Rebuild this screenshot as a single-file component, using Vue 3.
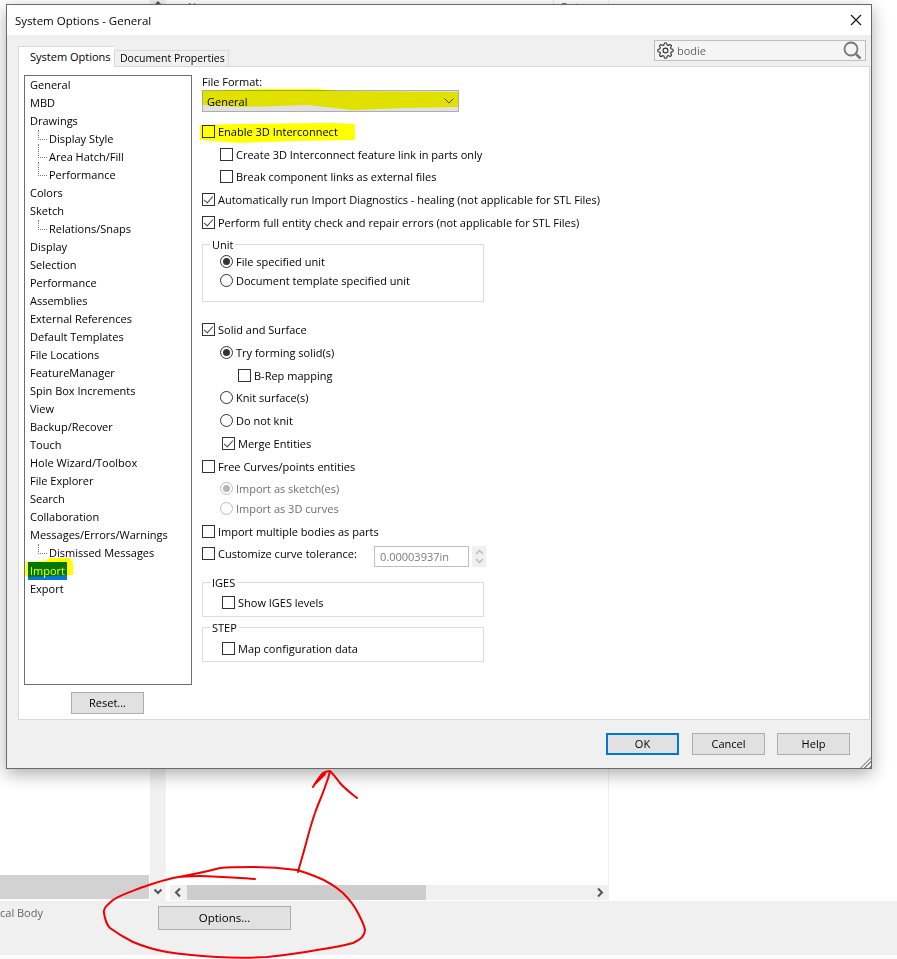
<template>
  <div class="screen">
    <div class="backdrop">
      <div class="panes">
        <div class="pane-left">
          <div class="left-bar"></div>
        </div>
        <div class="vscroll">
          <svg class="arrow-up" width="10" height="8" viewBox="0 0 10 8"><path d="M1.5 6 5 2.5 8.5 6" fill="none" stroke="#555" stroke-width="2" /></svg>
          <svg class="arrow-down" width="10" height="8" viewBox="0 0 10 8"><path d="M1.5 1.5 5 5 8.5 1.5" fill="none" stroke="#555" stroke-width="2" /></svg>
        </div>
        <div class="pane-mid">
          <div class="pane-head">
            <span class="head-a">Name</span>
            <span class="head-b">Date</span>
          </div>
          <div class="hscroll">
            <svg class="hs-btn" width="17" height="15" viewBox="0 0 17 15"><path d="M10 3.5 6 7.5 10 11.5" fill="none" stroke="#555" stroke-width="2" /></svg>
            <div class="hs-thumb"></div>
            <div class="hs-track"></div>
            <svg class="hs-btn" width="17" height="15" viewBox="0 0 17 15"><path d="M7 3.5 11 7.5 7 11.5" fill="none" stroke="#555" stroke-width="2" /></svg>
          </div>
        </div>
        <div class="pane-right"></div>
      </div>
      <div class="status">
        <span class="status-text">cal Body</span>
        <button class="btn options-btn">Options...</button>
      </div>
    </div>

    <div class="dialog">
      <div class="titlebar">
        <span>System Options - General</span>
        <svg class="close" width="12" height="12" viewBox="0 0 12 12"><path d="M1 1 11 11M11 1 1 11" stroke="#111" stroke-width="1.1" fill="none" /></svg>
      </div>
      <div class="tabrow">
        <div class="tab active">System Options</div>
        <div class="tab">Document Properties</div>
        <div class="search">
          <svg class="gear" width="17" height="17" viewBox="0 0 24 24" fill="none" stroke="#333" stroke-width="1.6">
            <circle cx="12" cy="12" r="3.4" />
            <path d="M19.4 15a1.65 1.65 0 0 0 .33 1.82l.06.06a2 2 0 0 1 0 2.83 2 2 0 0 1-2.83 0l-.06-.06a1.65 1.65 0 0 0-1.82-.33 1.65 1.65 0 0 0-1 1.51V21a2 2 0 0 1-2 2 2 2 0 0 1-2-2v-.09A1.65 1.65 0 0 0 9 19.4a1.65 1.65 0 0 0-1.82.33l-.06.06a2 2 0 0 1-2.83 0 2 2 0 0 1 0-2.83l.06-.06a1.65 1.65 0 0 0 .33-1.82 1.65 1.65 0 0 0-1.51-1H3a2 2 0 0 1-2-2 2 2 0 0 1 2-2h.09A1.65 1.65 0 0 0 4.6 9a1.65 1.65 0 0 0-.33-1.82l-.06-.06a2 2 0 0 1 0-2.83 2 2 0 0 1 2.83 0l.06.06a1.65 1.65 0 0 0 1.82.33H9a1.65 1.65 0 0 0 1-1.51V3a2 2 0 0 1 2-2 2 2 0 0 1 2 2v.09a1.65 1.65 0 0 0 1 1.51 1.65 1.65 0 0 0 1.82-.33l.06-.06a2 2 0 0 1 2.83 0 2 2 0 0 1 0 2.83l-.06.06a1.65 1.65 0 0 0-.33 1.82V9a1.65 1.65 0 0 0 1.51 1H21a2 2 0 0 1 2 2 2 2 0 0 1-2 2h-.09a1.65 1.65 0 0 0-1.51 1z" />
          </svg>
          <span class="search-text">bodie</span>
          <svg class="magnifier" width="19" height="19" viewBox="0 0 19 19" fill="none" stroke="#777">
            <circle cx="8" cy="8" r="6.5" stroke-width="1.8" />
            <path d="M12.8 12.8 17.5 17.5" stroke-width="2.6" />
          </svg>
        </div>
      </div>

      <div class="panel">
        <div class="side">
          <ul class="tree">
            <li
              v-for="item in treeItems"
              :key="item.key"
              :class="{ child: item.child, first: item.first }"
            >
              <span :class="{ selected: item.label === 'Import' }">{{ item.label }}</span>
            </li>
          </ul>
          <button class="btn reset-btn">Reset...</button>
        </div>

        <div class="options">
          <div class="field-label">File Format:</div>
          <div class="combo">
            <span>General</span>
            <svg width="10" height="6" viewBox="0 0 10 6"><path d="M.5.5 5 5 9.5.5" fill="none" stroke="#444" /></svg>
          </div>

          <label class="row enable"><i class="box"></i>Enable 3D Interconnect</label>
          <label class="row in1 tight"><i class="box"></i>Create 3D Interconnect feature link in parts only</label>
          <label class="row in1"><i class="box"></i>Break component links as external files</label>
          <label class="row"><i class="box on"></i>Automatically run Import Diagnostics - healing (not applicable for STL Files)</label>
          <label class="row last"><i class="box on"></i>Perform full entity check and repair errors (not applicable for STL Files)</label>

          <fieldset class="group unit">
            <legend>Unit</legend>
            <label class="row gap5"><i class="radio on"></i>File specified unit</label>
            <label class="row gap5"><i class="radio"></i>Document template specified unit</label>
          </fieldset>

          <label class="row"><i class="box on"></i>Solid and Surface</label>
          <label class="row in1"><i class="radio on"></i>Try forming solid(s)</label>
          <label class="row in2 tight"><i class="box"></i>B-Rep mapping</label>
          <label class="row in1"><i class="radio"></i>Knit surface(s)</label>
          <label class="row in1"><i class="radio"></i>Do not knit</label>
          <label class="row in1b"><i class="box on"></i>Merge Entities</label>
          <label class="row tight"><i class="box"></i>Free Curves/points entities</label>
          <label class="row in1 off gap6"><i class="radio on"></i>Import as sketch(es)</label>
          <label class="row in1 off"><i class="radio"></i>Import as 3D curves</label>
          <label class="row tight"><i class="box"></i>Import multiple bodies as parts</label>
          <div class="row last">
            <label class="tolerance"><i class="box"></i>Customize curve tolerance:</label>
            <div class="spin-input">0.00003937in</div>
            <div class="spinner">
              <svg width="9" height="6" viewBox="0 0 9 6"><path d="M1 5 4.5 1.5 8 5" fill="none" stroke="#bbb" stroke-width="1.4" /></svg>
              <svg width="9" height="6" viewBox="0 0 9 6"><path d="M1 1 4.5 4.5 8 1" fill="none" stroke="#bbb" stroke-width="1.4" /></svg>
            </div>
          </div>

          <fieldset class="group small iges">
            <legend>IGES</legend>
            <label class="row"><i class="box"></i>Show IGES levels</label>
          </fieldset>
          <fieldset class="group small step">
            <legend>STEP</legend>
            <label class="row"><i class="box"></i>Map configuration data</label>
          </fieldset>
        </div>
      </div>

      <div class="footer">
        <button class="btn ok">OK</button>
        <button class="btn">Cancel</button>
        <button class="btn">Help</button>
      </div>
      <div class="grip"></div>
    </div>

    <!-- marker highlights and red pen drawn over the screenshot -->
    <svg class="marker" width="897" height="959" viewBox="0 0 897 959">
      <path fill="#ffff00" d="M202 91 260 89 318 89 337 91 458 92 458 107 403 108 353 110 307 105 243 107 203 105Z" />
      <path fill="#ffff00" d="M200 125 240 124 333 123 355 124 355 140 290 141 240 143 200 140Z" />
      <path fill="#ffff00" d="M26 562 45 561 50 558 70 558 73 563 73 575 28 577 25 575Z" />
    </svg>
    <svg class="pen" width="897" height="959" viewBox="0 0 897 959" fill="none" stroke="#f00000" stroke-width="2" stroke-linecap="round" stroke-linejoin="round">
      <path d="M255 879C235 878 215 876 200 876C185 876 178 877 173 878C160 881 152 884 143 887C130 892 120 895 113 900C106 906 103 909 104 913C105 920 106 924 110 928C118 934 125 938 133 942C145 947 155 950 167 952C185 955 200 956 217 957C235 958 250 958 267 957C285 955 300 953 317 950C330 948 342 946 353 943C360 940 365 936 365 930C364 924 361 919 358 913C354 905 349 899 343 893C335 886 327 881 317 877C310 874 304 872 297 870C282 868 268 867 253 867C240 867 230 867 220 868C205 872 190 875 173 878" />
      <path d="M298 872C300 864 303 855 305 847C308 836 311 824 315 813C318 804 322 796 325 787C327 782 329 776 330 771M313 787C316 782 319 777 323 773C325 772 328 771 330 771C334 775 337 779 340 783C345 789 351 793 357 798M316 783 325 774" />
    </svg>
  </div>
</template>

<script setup>
const labels = [
  'General', 'MBD', 'Drawings',
  '>Display Style', '>Area Hatch/Fill', '>Performance',
  'Colors', 'Sketch', '>Relations/Snaps',
  'Display', 'Selection', 'Performance', 'Assemblies', 'External References',
  'Default Templates', 'File Locations', 'FeatureManager', 'Spin Box Increments',
  'View', 'Backup/Recover', 'Touch', 'Hole Wizard/Toolbox', 'File Explorer',
  'Search', 'Collaboration', 'Messages/Errors/Warnings', '>Dismissed Messages',
  'Import', 'Export',
];

const treeItems = labels.map((raw, i) => {
  const child = raw.startsWith('>');
  const prevChild = i > 0 && labels[i - 1].startsWith('>');
  return {
    key: i,
    child,
    first: child && !prevChild,
    label: child ? raw.slice(1) : raw,
  };
});
</script>

<style>
html, body { margin: 0; background: #fff; }
</style>

<style scoped>
.screen {
  position: relative;
  width: 897px;
  height: 959px;
  overflow: hidden;
  background: #fff;
  font-family: "Open Sans", "Noto Sans", sans-serif;
  font-size: 11px;
  color: #000;
}

.btn {
  box-sizing: border-box;
  width: 73px;
  height: 22px;
  padding: 0 0 2px;
  background: #e1e1e1;
  border: 1px solid #adadad;
  color: #000;
  font: inherit;
}

.backdrop { display: flex; flex-direction: column; height: 955px; }
.panes { display: flex; height: 901px; }
.pane-left { width: 150px; position: relative; display: flex; flex-direction: column; justify-content: flex-end; }
.left-bar { height: 24px; margin-bottom: 2px; background: #d2d2d2; width: 149px; }
.vscroll {
  width: 16px;
  margin-right: 2px;
  background: #f0f0f0;
  border-right: 1px solid #f4f4f4;
  display: flex;
  flex-direction: column;
  justify-content: space-between;
  align-items: center;
  padding-bottom: 5px;
  box-sizing: border-box;
}
.pane-mid {
  width: 440px;
  border-right: 1px solid #f0f0f0;
  display: flex;
  flex-direction: column;
  justify-content: space-between;
}
.pane-head { height: 20px; position: relative; color: #555; }
.head-a { position: absolute; left: 20px; top: 0; line-height: 14px; }
.head-b {
  position: absolute;
  left: 385px;
  top: 0;
  width: 54px;
  padding-left: 7px;
  box-sizing: border-box;
  line-height: 14px;
  border-left: 1px solid #e4e4e4;
}
.hscroll { display: flex; height: 15px; margin: 0 0 1px 2px; background: #f0f0f0; }
.hs-btn { flex: none; }
.hs-thumb { width: 239px; background: #cdcdcd; }
.hs-track { flex: 1; }
.pane-right { flex: 1; }

.status {
  flex: 1;
  background: #f0f0f0;
  display: flex;
  align-items: flex-start;
}
.status-text { width: 158px; margin-top: 4px; color: #666; white-space: nowrap; }
.btn.options-btn { width: 133px; height: 24px; margin-top: 5px; font-size: 11.5px; }

.dialog {
  position: absolute;
  left: 6px;
  top: 4px;
  width: 866px;
  height: 765px;
  box-sizing: border-box;
  background: #f0f0f0;
  border: 1px solid #6a6a6a;
  box-shadow: 0 5px 16px rgba(0, 0, 0, 0.32);
  display: flex;
  flex-direction: column;
}
.titlebar {
  height: 30px;
  flex: none;
  background: #fff;
  display: flex;
  align-items: center;
  justify-content: space-between;
  padding: 0 9px 0 8px;
  font-size: 11.5px;
}
.close { flex: none; }

.tabrow {
  height: 31px;
  flex: none;
  display: flex;
  align-items: flex-end;
  padding-left: 11px;
  position: relative;
}
.tab {
  box-sizing: border-box;
  width: 115px;
  height: 16px;
  padding: 0 0 2px 5px;
  background: #f0f0f0;
  border: 1px solid #d9d9d9;
  border-bottom: none;
  display: flex;
  align-items: center;
  white-space: nowrap;
  font-size: 10.5px;
}
.tab.active {
  height: 21px;
  width: 96px;
  padding: 0 0 1px 11px;
  background: #fff;
  border-right: none;
  margin-bottom: -1px;
  position: relative;
  z-index: 1;
  font-size: 11px;
}
.search {
  position: absolute;
  left: 647px;
  top: 5px;
  width: 212px;
  height: 21px;
  box-sizing: border-box;
  background: #f5f5f5;
  border: 1px solid #bfbfbf;
  display: flex;
  align-items: center;
  padding: 0 3px 0 2px;
}
.search-text { margin-left: 3px; color: #666; flex: 1; }

.panel {
  flex: none;
  height: 654px;
  margin: 0 1px 0 11px;
  box-sizing: border-box;
  background: #fff;
  border: 1px solid #d9d9d9;
  display: flex;
}
.side {
  width: 167px;
  margin: 8px 2px 0 5px;
  display: flex;
  flex-direction: column;
  align-items: center;
}
.tree {
  flex: none;
  list-style: none;
  margin: 0;
  padding: 0 0 0 3px;
  width: 168px;
  height: 610px;
  box-sizing: border-box;
  border: 1px solid #6e6e6e;
  align-self: flex-start;
}
.tree li {
  position: relative;
  height: 18px;
  line-height: 18px;
  white-space: nowrap;
}
.tree li span { display: inline-block; padding: 0 2px; height: 18px; }
.tree li.child { padding-left: 19px; }
.tree li.child::before {
  content: "";
  position: absolute;
  left: 10px;
  top: -4px;
  bottom: 8px;
  width: 8px;
  border-left: 1px dotted #777;
  border-bottom: 1px dotted #777;
}
.tree li.child.first::before { top: 0; }
.tree .selected { background: #0078d7; color: #fff; }
.reset-btn { margin-top: 7px; }

.options { margin: 8px 0 0 9px; width: 640px; }
.field-label { height: 14px; line-height: 14px; }
.combo {
  box-sizing: border-box;
  width: 257px;
  height: 22px;
  margin-top: 1px;
  padding: 0 4px;
  background: #e1e1e1;
  border: 1px solid #adadad;
  display: flex;
  align-items: center;
  justify-content: space-between;
}

.row {
  display: flex;
  align-items: center;
  height: 14px;
  margin-bottom: 9px;
  white-space: nowrap;
}
.row.tight { margin-bottom: 8px; }
.row.last { margin-bottom: 0; }
.row.gap5 { margin-bottom: 5px; }
.row.gap6 { margin-bottom: 6px; }
.row.enable { margin-top: 12px; }
.row.in1 { padding-left: 18px; }
.row.in1b { padding-left: 20px; }
.row.in2 { padding-left: 36px; }
.row.off { color: #6d6d6d; }

.box, .radio {
  flex: none;
  box-sizing: border-box;
  width: 13px;
  height: 13px;
  margin-right: 3px;
  background: transparent;
  border: 1px solid #333;
  position: relative;
  display: block;
}
.box.on::after {
  content: "";
  position: absolute;
  left: 3px;
  top: 0;
  width: 4px;
  height: 8px;
  border: solid #444;
  border-width: 0 1.4px 1.4px 0;
  transform: rotate(42deg);
}
.radio { border-radius: 50%; }
.radio.on::after {
  content: "";
  position: absolute;
  left: 2px;
  top: 2px;
  width: 7px;
  height: 7px;
  border-radius: 50%;
  background: #333;
}
.off .radio { border-color: #bcbcbc; }
.off .radio.on::after { background: #b5b5b5; }

.group {
  box-sizing: border-box;
  width: 282px;
  margin: 0;
  padding: 0;
  border: 1px solid #dcdcdc;
  position: relative;
}
.group legend {
  position: absolute;
  left: 7px;
  top: -7px;
  padding: 0 2px;
  background: #fff;
  line-height: 14px;
}
.unit { height: 58px; margin-top: 15px; margin-bottom: 20px; padding: 9px 0 0 17px; }
.small { height: 35px; padding: 12px 0 0 19px; }
.small .row { margin-bottom: 0; }
.iges { margin-top: 22px; margin-bottom: 10px; }
.step { padding-top: 13px; }

.tolerance { width: 172px; display: flex; align-items: center; }
.spin-input {
  flex: none;
  box-sizing: border-box;
  width: 95px;
  height: 21px;
  margin-top: 6px;
  padding-left: 5px;
  border: 1px solid #bfbfbf;
  color: #7a7a7a;
  display: flex;
  align-items: center;
}
.spinner {
  flex: none;
  width: 14px;
  height: 21px;
  margin: 6px 0 0 3px;
  background: #f0f0f0;
  display: flex;
  flex-direction: column;
  align-items: center;
  justify-content: space-evenly;
}

.footer {
  flex: 1;
  display: flex;
  justify-content: flex-end;
  gap: 12px;
  padding: 13px 21px 0 0;
}
.ok { border: 2px solid #0078d7; margin-right: 1px; }
.grip {
  position: absolute;
  right: 0;
  bottom: 0;
  width: 11px;
  height: 11px;
  background: repeating-linear-gradient(135deg, #f0f0f0 0 1.5px, #8f8f8f 1.5px 3px);
  clip-path: polygon(100% 0, 100% 100%, 0 100%);
}

.marker, .pen {
  position: absolute;
  left: 0;
  top: 0;
  pointer-events: none;
}
.marker { mix-blend-mode: multiply; }
</style>
